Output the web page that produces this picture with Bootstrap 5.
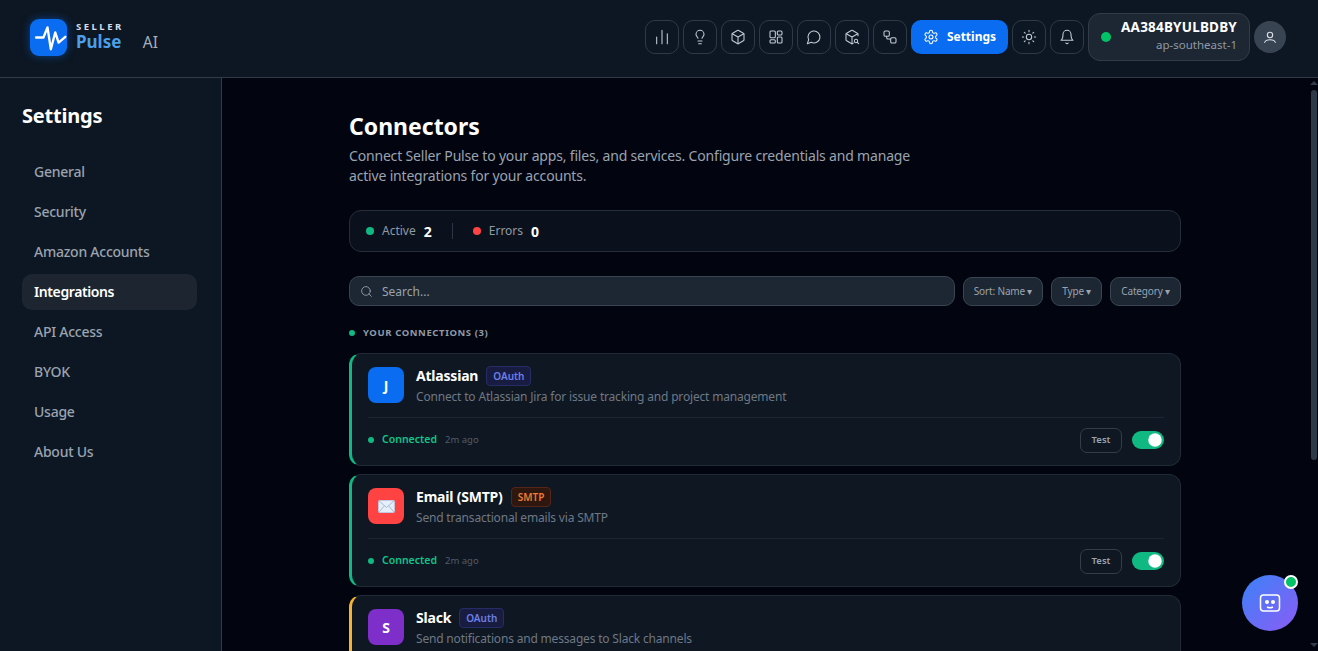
<!DOCTYPE html>
<html lang="en">
<head>
    <meta charset="UTF-8">
    <meta name="viewport" content="width=device-width, initial-scale=1.0">
    <title>Seller Pulse AI - Connectors</title>
    <link href="https://cdn.jsdelivr.net/npm/bootstrap@5.3.0/dist/css/bootstrap.min.css" rel="stylesheet">
    <style>
        html, body { height: 100%; overflow: hidden; }
        body { background: #02050f; color: #fff; font-family: "Noto Sans", "Open Sans", sans-serif; font-size: 14px; }
        svg.ico { width: 16px; height: 16px; fill: none; stroke: currentColor; stroke-width: 1.6; stroke-linecap: round; stroke-linejoin: round; flex: none; }

        .top-bar { height: 78px; background: #0d1723; border-bottom: 1px solid #323c49; padding: 0 32px 3px 30px; flex: none; }
        .logo-link { margin-top: 1px; }
        .logo-box { width: 37px; height: 37px; border-radius: 9px; background: #0a6cf0; box-shadow: 0 0 8px rgba(10,108,240,.5); margin-right: 9px; }
        .logo-box svg { width: 37px; height: 37px; fill: none; stroke: #fff; stroke-width: 7; stroke-linecap: round; stroke-linejoin: round; }
        .logo-seller { font-size: 9.5px; font-weight: 700; letter-spacing: 2.5px; color: #d5deea; line-height: 11px; margin-top: -3px; }
        .logo-pulse { font-size: 17px; font-weight: 700; color: #4a9fe8; line-height: 19px; }
        .logo-ai { font-size: 15.5px; color: #a6afbb; margin-left: 19px; margin-top: 10px; }

        .tool-btn { width: 34px; height: 34px; padding: 0; border: 1px solid #2f3a48; border-radius: 10px; background: transparent; color: #c2cad4; }
        .tool-btn:hover { background: #1c2733; color: #fff; border-color: #2f3a48; }
        .settings-btn { width: 97px; height: 34px; padding: 0; border: 0; border-radius: 10px; background: #0a6cf0; color: #fff; font-size: 12px; font-weight: 700; }
        .account-box { width: 162px; height: 48px; background: #1c2733; border: 1px solid #323c49; border-radius: 12px; padding: 0 12px; }
        .account-dot { width: 10px; height: 10px; border-radius: 50%; background: #00c266; }
        .account-id { font-size: 13.5px; font-weight: 700; letter-spacing: .2px; line-height: 17px; color: #fff; margin-top: -2px; }
        .account-region { font-size: 11.5px; color: #8f99a6; line-height: 17px; }
        .avatar { width: 32px; height: 32px; border-radius: 50%; background: #394452; color: #dbe2ea; }

        .side { width: 222px; flex: none; background: #0d1723; border-right: 1px solid #323c49; padding: 0 24px 0 22px; }
        .side h2 { font-size: 20px; font-weight: 700; letter-spacing: -.2px; margin: 24px 0 25px; line-height: 27px; }
        .side .nav-link { height: 36px; padding: 0 12px 1px; margin-bottom: 4px; display: flex; align-items: center; font-size: 14px; font-weight: 500; letter-spacing: -.25px; color: #9aa3af; border-radius: 10px; }
        .side .nav-link.active { background: #1c2530; color: #fff; font-weight: 600; letter-spacing: -.4px; }

        .main-pane { overflow-y: auto; min-width: 0; scrollbar-width: none; }
        .scroll-rail { width: 8px; flex: none; }
        .rail-up, .rail-down { width: 0; height: 0; border-left: 4px solid transparent; border-right: 4px solid transparent; }
        .rail-up { border-bottom: 4px solid #323c49; margin-top: 3px; }
        .rail-down { border-top: 4px solid #323c49; margin-bottom: 4px; }
        .rail-thumb { width: 6px; height: 370px; margin-top: 5px; border-radius: 3px; background: #2e3a4a; }

        .content { width: 832px; margin-left: 127px; padding: 32px 0 260px; }
        .content h1 { font-size: 23px; font-weight: 700; line-height: 32px; margin: 0 0 4px; }
        .lead-text { width: 570px; font-size: 14px; letter-spacing: -.18px; line-height: 20px; color: #9aa3af; margin-bottom: 24px; }

        .stat-bar { height: 42px; background: #0b111c; border: 1px solid #252e3a; border-radius: 12px; padding: 0 16px; margin-bottom: 24px; font-size: 12px; color: #8f99a6; }
        .dot { width: 8px; height: 8px; border-radius: 50%; flex: none; }
        .dot-green { background: #10b981; }
        .dot-red { background: #ff4343; }
        .stat-num { font-size: 14px; font-weight: 700; color: #fff; margin-left: 8px; }
        .stat-sep { width: 1px; height: 16px; background: #2c3643; margin: 0 20px; }

        .search-wrap { flex: 1; height: 30px; background: #1c2733; border: 1px solid #3a4553; border-radius: 10px; padding: 0 10px; color: #9aa3af; }
        .search-wrap .form-control { background: transparent; border: 0; box-shadow: none; padding: 0 0 0 1px; font-size: 12px; color: #fff; height: 28px; }
        .search-wrap .form-control::placeholder { color: #9aa3af; opacity: 1; }
        .filter-btn { height: 29px; padding: 0 10px; background: #1c2733; border: 1px solid #3a4553; border-radius: 9px; font-size: 10px; letter-spacing: -.15px; color: #9aa3af; white-space: nowrap; }
        .filter-btn:hover { background: #1c2733; border-color: #3a4553; color: #9aa3af; }

        .section-label { font-size: 9.5px; font-weight: 700; letter-spacing: .6px; color: #8f99a6; margin: 20px 0 14px; line-height: 13px; }
        .dot-sm { width: 6px; height: 6px; margin-right: 8px; }

        .conn-card { background: #0e1722; border: 1px solid #212b37; border-left: 3px solid #10b981; border-radius: 12px; padding: 13px 16px 12px 16px; margin-bottom: 8px; color: #fff; }
        .conn-card.warn { border-left-color: #f5b32f; }
        .conn-icon { width: 36px; height: 36px; border-radius: 8px; color: #fff; font-size: 14px; font-weight: 700; flex: none; margin-right: 12px; }
        .bg-jira { background: #0a6cf0; }
        .bg-mail { background: #ff4343; }
        .bg-slack { background: #7e2fc9; }
        .conn-name { font-size: 14px; font-weight: 700; letter-spacing: -.2px; line-height: 17px; }
        .conn-tag { font-size: 10px; font-weight: 600; line-height: 18px; padding: 0 6px; border-radius: 4px; margin-left: 8px; }
        .tag-oauth { background: #171c40; border: 1px solid #262c66; color: #6b7fe8; }
        .tag-smtp { background: #2e170f; border: 1px solid #57241a; color: #f07a30; }
        .conn-desc { font-size: 12px; letter-spacing: -.18px; line-height: 17px; color: #6e7885; margin-top: 2px; }
        .conn-head { height: 36px; }
        .conn-foot { border-top: 1px solid #1c2531; margin-top: 14px; padding-top: 9px; height: 36px; }
        .conn-status { font-size: 10.5px; font-weight: 600; color: #10c48c; margin-left: 8px; }
        .conn-time { font-size: 9.5px; color: #525c69; margin-left: 8px; }
        .test-btn { width: 42px; height: 25px; padding: 0; background: transparent; border: 1px solid #343e4b; border-radius: 7px; font-size: 9.5px; font-weight: 600; color: #9aa3af; margin-right: 10px; }
        .test-btn:hover { background: transparent; border-color: #343e4b; color: #9aa3af; }
        .form-switch.conn-switch { padding: 0; margin: 0; min-height: 0; height: 18px; }
        .form-switch.conn-switch .form-check-input { width: 32px; height: 18px; margin: 0; border: 0; background-color: #10b981; box-shadow: none; float: none; display: block; }

        .chat-fab { position: fixed; left: 1242px; top: 575px; width: 56px; height: 56px; border: 0; border-radius: 50%; background: linear-gradient(135deg, #3b82f6, #8b5cf6); color: #fff; padding: 0; }
        .chat-fab svg { width: 24px; height: 24px; fill: none; stroke: currentColor; stroke-width: 1.5; }
        .chat-dot { position: absolute; top: 0; right: 0; width: 14px; height: 14px; border-radius: 50%; background: #00c266; border: 2px solid #fff; }
    </style>
</head>
<body class="d-flex flex-column">

    <header class="top-bar d-flex align-items-center justify-content-between">
        <a href="#" class="logo-link d-flex align-items-center text-decoration-none">
            <span class="logo-box d-flex align-items-center justify-content-center">
                <svg viewBox="0 0 110 110"><path d="M18 55h22l12-30 10 65 13-50 10 30 20-17"/></svg>
            </span>
            <span class="d-flex flex-column">
                <span class="logo-seller">SELLER</span>
                <span class="logo-pulse">Pulse</span>
            </span>
            <span class="logo-ai">AI</span>
        </a>
        <div class="d-flex align-items-center gap-1">
            <button class="btn tool-btn d-flex align-items-center justify-content-center" title="Analytics">
                <svg class="ico" viewBox="0 0 24 24"><path d="M4 22V12M12 22V2M20 22V7"/></svg>
            </button>
            <button class="btn tool-btn d-flex align-items-center justify-content-center" title="Insights">
                <svg class="ico" viewBox="0 0 24 24"><path d="M15 14c.2-1 .7-1.7 1.5-2.5 1-.9 1.5-2.2 1.5-3.5A6 6 0 0 0 6 8c0 1 .2 2.2 1.5 3.5.7.7 1.3 1.5 1.5 2.5"/><path d="M9 18h6M10 22h4"/></svg>
            </button>
            <button class="btn tool-btn d-flex align-items-center justify-content-center" title="Products">
                <svg class="ico" viewBox="0 0 24 24"><path d="M21 8a2 2 0 0 0-1-1.73l-7-4a2 2 0 0 0-2 0l-7 4A2 2 0 0 0 3 8v8a2 2 0 0 0 1 1.73l7 4a2 2 0 0 0 2 0l7-4A2 2 0 0 0 21 16Z"/><path d="m3.3 7 8.7 5 8.7-5M12 22V12"/></svg>
            </button>
            <button class="btn tool-btn d-flex align-items-center justify-content-center" title="Dashboard">
                <svg class="ico" viewBox="0 0 24 24"><rect x="3" y="3" width="8" height="10" rx="1.5"/><rect x="14" y="3" width="7" height="6" rx="1.5"/><rect x="14" y="12" width="7" height="9" rx="1.5"/><rect x="3" y="16" width="8" height="5" rx="1.5"/></svg>
            </button>
            <button class="btn tool-btn d-flex align-items-center justify-content-center" title="Chat">
                <svg class="ico" viewBox="0 0 24 24"><path d="M7.9 20A9 9 0 1 0 4 16.1L2 22Z"/></svg>
            </button>
            <button class="btn tool-btn d-flex align-items-center justify-content-center" title="Product search">
                <svg class="ico" viewBox="0 0 24 24"><path d="M21 10V8a2 2 0 0 0-1-1.73l-7-4a2 2 0 0 0-2 0l-7 4A2 2 0 0 0 3 8v8a2 2 0 0 0 1 1.73l7 4a2 2 0 0 0 2 0l1-.6"/><path d="m3.3 7 8.7 5 8.7-5M12 22V12"/><circle cx="18" cy="18" r="2.5"/><path d="m20 20 2 2"/></svg>
            </button>
            <button class="btn tool-btn d-flex align-items-center justify-content-center" title="Workflows">
                <svg class="ico" viewBox="0 0 24 24"><rect x="3" y="3" width="8" height="8" rx="2"/><rect x="13" y="13" width="8" height="8" rx="2"/><path d="M7 11v2a2 2 0 0 0 2 2h4"/></svg>
            </button>
            <button class="btn settings-btn d-flex align-items-center justify-content-center gap-2">
                <svg class="ico" viewBox="0 0 24 24"><path d="M12.22 2h-.44a2 2 0 0 0-2 2v.18a2 2 0 0 1-1 1.73l-.43.25a2 2 0 0 1-2 0l-.15-.08a2 2 0 0 0-2.73.73l-.22.38a2 2 0 0 0 .73 2.73l.15.1a2 2 0 0 1 1 1.72v.51a2 2 0 0 1-1 1.74l-.15.09a2 2 0 0 0-.73 2.73l.22.38a2 2 0 0 0 2.73.73l.15-.08a2 2 0 0 1 2 0l.43.25a2 2 0 0 1 1 1.73V20a2 2 0 0 0 2 2h.44a2 2 0 0 0 2-2v-.18a2 2 0 0 1 1-1.73l.43-.25a2 2 0 0 1 2 0l.15.08a2 2 0 0 0 2.73-.73l.22-.39a2 2 0 0 0-.73-2.73l-.15-.08a2 2 0 0 1-1-1.74v-.5a2 2 0 0 1 1-1.74l.15-.09a2 2 0 0 0 .73-2.73l-.22-.38a2 2 0 0 0-2.73-.73l-.15.08a2 2 0 0 1-2 0l-.43-.25a2 2 0 0 1-1-1.73V4a2 2 0 0 0-2-2z"/><circle cx="12" cy="12" r="3"/></svg>
                Settings
            </button>
            <button class="btn tool-btn d-flex align-items-center justify-content-center" title="Theme">
                <svg class="ico" viewBox="0 0 24 24"><circle cx="12" cy="12" r="4"/><path d="M12 2v2M12 20v2M4.9 4.9l1.4 1.4M17.7 17.7l1.4 1.4M2 12h2M20 12h2M6.3 17.7l-1.4 1.4M19.1 4.9l-1.4 1.4"/></svg>
            </button>
            <button class="btn tool-btn d-flex align-items-center justify-content-center" title="Notifications">
                <svg class="ico" viewBox="0 0 24 24"><path d="M6 8a6 6 0 0 1 12 0c0 7 3 9 3 9H3s3-2 3-9"/><path d="M10.3 21a1.94 1.94 0 0 0 3.4 0"/></svg>
            </button>
            <div class="account-box d-flex align-items-center justify-content-between">
                <span class="account-dot"></span>
                <div class="text-end">
                    <div class="account-id">AA384BYULBDBY</div>
                    <div class="account-region">ap-southeast-1</div>
                </div>
            </div>
            <div class="avatar d-flex align-items-center justify-content-center">
                <svg class="ico" viewBox="0 0 24 24"><circle cx="12" cy="9" r="4"/><path d="M4 20c1-3 4-4 8-4s7 1 8 4"/></svg>
            </div>
        </div>
    </header>

    <div class="d-flex flex-grow-1" style="min-height:0">
        <aside class="side">
            <h2>Settings</h2>
            <nav class="nav flex-column">
                <a class="nav-link" href="#">General</a>
                <a class="nav-link" href="#">Security</a>
                <a class="nav-link" href="#">Amazon Accounts</a>
                <a class="nav-link active" href="#">Integrations</a>
                <a class="nav-link" href="#">API Access</a>
                <a class="nav-link" href="#">BYOK</a>
                <a class="nav-link" href="#">Usage</a>
                <a class="nav-link" href="#">About Us</a>
            </nav>
        </aside>

        <main class="main-pane flex-grow-1">
            <div class="content">
                <h1>Connectors</h1>
                <p class="lead-text">Connect Seller Pulse to your apps, files, and services. Configure credentials and manage active integrations for your accounts.</p>

                <div class="stat-bar d-flex align-items-center">
                    <span class="dot dot-green me-2"></span>Active<span class="stat-num">2</span>
                    <span class="stat-sep"></span>
                    <span class="dot dot-red me-2"></span>Errors<span class="stat-num">0</span>
                </div>

                <div class="d-flex align-items-center gap-2">
                    <div class="search-wrap d-flex align-items-center gap-2">
                        <svg class="ico" viewBox="0 0 24 24" style="width:13px;height:13px"><circle cx="11" cy="11" r="8"/><path d="m21 21-4.3-4.3"/></svg>
                        <input type="text" class="form-control" placeholder="Search...">
                    </div>
                    <button class="btn filter-btn">Sort: Name ▾</button>
                    <button class="btn filter-btn">Type ▾</button>
                    <button class="btn filter-btn">Category ▾</button>
                </div>

                <div class="section-label d-flex align-items-center">
                    <span class="dot dot-green dot-sm"></span>YOUR CONNECTIONS (3)
                </div>

                <div class="card conn-card">
                    <div class="conn-head d-flex align-items-center">
                        <div class="conn-icon bg-jira d-flex align-items-center justify-content-center">J</div>
                        <div>
                            <div class="d-flex align-items-center"><span class="conn-name">Atlassian</span><span class="conn-tag tag-oauth">OAuth</span></div>
                            <div class="conn-desc">Connect to Atlassian Jira for issue tracking and project management</div>
                        </div>
                    </div>
                    <div class="conn-foot d-flex align-items-center">
                        <span class="dot dot-sm dot-green m-0"></span><span class="conn-status">Connected</span><span class="conn-time">2m ago</span>
                        <button class="btn test-btn ms-auto">Test</button>
                        <div class="form-check form-switch conn-switch"><input class="form-check-input" type="checkbox" role="switch" checked></div>
                    </div>
                </div>

                <div class="card conn-card">
                    <div class="conn-head d-flex align-items-center">
                        <div class="conn-icon bg-mail d-flex align-items-center justify-content-center">
                            <svg viewBox="0 0 18 14" width="17" height="13"><rect x=".5" y=".5" width="17" height="13" rx="1" fill="#e6eef8" stroke="#b8cfe8"/><path d="M1 1l8 7 8-7M1 13l5.5-6.5M17 13l-5.5-6.5" fill="none" stroke="#9db9d8" stroke-width="1"/></svg>
                        </div>
                        <div>
                            <div class="d-flex align-items-center"><span class="conn-name">Email (SMTP)</span><span class="conn-tag tag-smtp">SMTP</span></div>
                            <div class="conn-desc">Send transactional emails via SMTP</div>
                        </div>
                    </div>
                    <div class="conn-foot d-flex align-items-center">
                        <span class="dot dot-sm dot-green m-0"></span><span class="conn-status">Connected</span><span class="conn-time">2m ago</span>
                        <button class="btn test-btn ms-auto">Test</button>
                        <div class="form-check form-switch conn-switch"><input class="form-check-input" type="checkbox" role="switch" checked></div>
                    </div>
                </div>

                <div class="card conn-card warn">
                    <div class="conn-head d-flex align-items-center">
                        <div class="conn-icon bg-slack d-flex align-items-center justify-content-center">S</div>
                        <div>
                            <div class="d-flex align-items-center"><span class="conn-name">Slack</span><span class="conn-tag tag-oauth">OAuth</span></div>
                            <div class="conn-desc">Send notifications and messages to Slack channels</div>
                        </div>
                    </div>
                    <div class="conn-foot d-flex align-items-center">
                        <span class="dot dot-sm dot-green m-0"></span><span class="conn-status">Connected</span><span class="conn-time">2m ago</span>
                        <button class="btn test-btn ms-auto">Test</button>
                        <div class="form-check form-switch conn-switch"><input class="form-check-input" type="checkbox" role="switch" checked></div>
                    </div>
                </div>
            </div>
        </main>

        <div class="scroll-rail d-flex flex-column align-items-center" aria-hidden="true">
            <span class="rail-up"></span>
            <span class="rail-thumb"></span>
            <span class="rail-down mt-auto"></span>
        </div>
    </div>

    <button class="chat-fab d-flex align-items-center justify-content-center" title="Assistant">
        <svg viewBox="0 0 24 24"><rect x="2.5" y="4" width="19" height="16" rx="3"/><circle cx="9" cy="11" r="2" fill="currentColor" stroke="none"/><circle cx="15" cy="11" r="2" fill="currentColor" stroke="none"/><path d="M9 16c2 1 4 1 6 0"/></svg>
        <span class="chat-dot"></span>
    </button>

    <script src="https://cdn.jsdelivr.net/npm/bootstrap@5.3.0/dist/js/bootstrap.bundle.min.js"></script>
</body>
</html>
